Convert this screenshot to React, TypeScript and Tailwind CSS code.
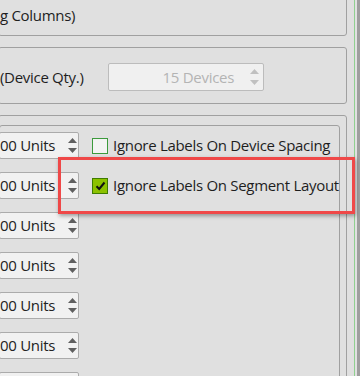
import React from 'react';

const font = { fontFamily: '"Open Sans", "Noto Sans", sans-serif', letterSpacing: '-0.3px' };

// Small spinner arrows (up / down)
const Arrows = ({ disabled = false }: { disabled?: boolean }) => {
  const color = disabled ? '#c0c0c0' : '#5e5e5e';
  return (
    <div className="flex flex-col items-center justify-between h-full py-[5px]">
      <svg width="9" height="5" viewBox="0 0 9 5">
        <polygon points="4.5,0 9,5 0,5" fill={color} />
      </svg>
      <svg width="9" height="5" viewBox="0 0 9 5">
        <polygon points="0,0 9,0 4.5,5" fill={color} />
      </svg>
    </div>
  );
};

const UnitSpinner = ({ text = '00 Units' }: { text?: string }) => (
  <div className="flex h-[27px] w-[80px] ml-[-2px] shrink-0 border border-[#ababab] bg-[#f1f1f1] rounded-[2px]">
    <div className="flex-1 flex items-center justify-end pr-[9px] text-[15px] text-[#222] whitespace-nowrap">
      {text}
    </div>
    <div className="w-[17px] shrink-0 flex justify-center">
      <Arrows />
    </div>
  </div>
);

const CheckBox = ({ checked }: { checked: boolean }) => (
  <div
    className={`w-[16px] h-[16px] shrink-0 border flex items-center justify-center ${
      checked ? 'bg-[#8cc200] border-[#3f7d00]' : 'bg-[#f3f3f3] border-[#3c9a3c]'
    }`}
  >
    {checked && (
      <svg width="11" height="10" viewBox="0 0 11 10">
        <path d="M1.5 5.2 L4.2 8 L9.5 1.5" stroke="#111" strokeWidth="2" fill="none" />
      </svg>
    )}
  </div>
);

const Row = ({ label, checked, text }: { label?: string; checked?: boolean; text?: string }) => (
  <div className="flex items-center h-[27px]">
    <UnitSpinner text={text} />
    {label && (
      <div className="flex items-center ml-[13px] gap-[5px]">
        <CheckBox checked={!!checked} />
        <span className="text-[15px] text-[#1e1e1e] whitespace-nowrap">{label}</span>
      </div>
    )}
  </div>
);

export default function App() {
  return (
    <div className="w-[360px] h-[376px] overflow-hidden bg-[#e0e0e0] flex relative" style={font}>
      {/* content area */}
      <div className="w-[354px] shrink-0 overflow-hidden">
        <div className="ml-[-2px] mr-[7px] flex flex-col">
          {/* group 1 */}
          <div className="mt-[-10px] h-[46px] border border-[#a0a0a0] rounded-[3px] pt-[14px] pl-[1px]">
            <div className="text-[15px] leading-[20px] text-[#1e1e1e] whitespace-nowrap">g Columns)</div>
          </div>

          {/* group 2 */}
          <div className="mt-[11px] border border-[#a0a0a0] rounded-[3px] pt-[15px] pb-[12px] pl-[1px]">
            <div className="flex items-center">
              <div className="w-[108px] shrink-0 text-[15px] text-[#1e1e1e] whitespace-nowrap">(Device Qty.)</div>
              <div className="flex h-[28px] w-[156px] border border-[#bcbcbc] bg-[#f0f0f0] rounded-[2px]">
                <div className="flex-1 flex items-center justify-end pr-[11px] text-[15px] text-[#b4b4b4] whitespace-nowrap">
                  15 Devices
                </div>
                <div className="w-[18px] shrink-0 flex justify-center">
                  <Arrows disabled />
                </div>
              </div>
            </div>
          </div>

          {/* group 3 */}
          <div className="mt-[11px] h-[300px] border border-[#a0a0a0] rounded-[3px] pt-[9px] pr-[6px]">
            <div className="h-[280px] border border-[#a0a0a0] rounded-[3px] pt-[6px] pl-[1px] flex flex-col gap-[13px]">
              <Row label="Ignore Labels On Device Spacing" checked={false} />
              <Row label="Ignore Labels On Segment Layout" checked />
              <Row />
              <Row />
              <Row />
              <Row />
              <Row text="" />
            </div>
          </div>
        </div>
      </div>

      {/* window edge */}
      <div className="w-px shrink-0 bg-[#8fd08f]" />
      <div className="w-[2px] shrink-0" />
      <div className="w-[3px] shrink-0 bg-[#9e9e9e]" />

      {/* highlight annotation */}
      <div className="absolute left-[58px] top-[157px] w-[297px] h-[57px] border-[3px] border-[#ef4848] shadow-[1px_2px_4px_rgba(0,0,0,0.35)]" />
    </div>
  );
}
